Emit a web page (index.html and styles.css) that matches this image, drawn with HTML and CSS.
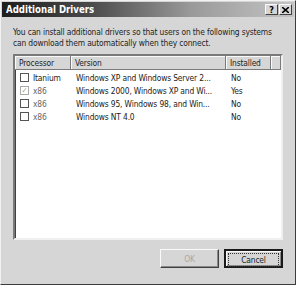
FILE: index.html
```html
<!DOCTYPE html>
<html lang="en">

<head>
  <meta charset="UTF-8">
  <title>Additional Drivers</title>
  <link rel="stylesheet" href="styles.css">
</head>

<body>
  <div class="dialog">
    <div class="titlebar">
      <span class="title">Additional Drivers</span>
      <div class="caption-buttons">
        <span class="caption-btn help">?</span>
        <span class="caption-btn close">
          <svg width="7" height="6" viewBox="0 0 7 6"><path d="M0 0L7 6M7 0L0 6" stroke="#000" stroke-width="1.6"/></svg>
        </span>
      </div>
    </div>

    <div class="content">
      <p class="intro">You can install additional drivers so that users on the following systems can download them automatically when they connect.</p>

      <div class="list">
        <div class="list-row list-header">
          <div class="col">Processor</div>
          <div class="col">Version</div>
          <div class="col">Installed</div>
          <div class="col"></div>
        </div>
        <div class="list-row">
          <div class="cell"><span class="check"></span>Itanium</div>
          <div class="cell">Windows XP and Windows Server 2...</div>
          <div class="cell">No</div>
        </div>
        <div class="list-row">
          <div class="cell dim"><span class="check checked">&#10003;</span>x86</div>
          <div class="cell">Windows 2000, Windows XP and Wi...</div>
          <div class="cell">Yes</div>
        </div>
        <div class="list-row">
          <div class="cell dim"><span class="check"></span>x86</div>
          <div class="cell">Windows 95, Windows 98, and Win...</div>
          <div class="cell">No</div>
        </div>
        <div class="list-row">
          <div class="cell dim"><span class="check"></span>x86</div>
          <div class="cell">Windows NT 4.0</div>
          <div class="cell">No</div>
        </div>
      </div>

      <div class="buttons">
        <button class="btn" disabled>OK</button>
        <button class="btn default"><span class="focus">Cancel</span></button>
      </div>
    </div>
  </div>
</body>

</html>
```

FILE: styles.css
```css
body {
  margin: 0;
  font-family: "DejaVu Sans Condensed", "DejaVu Sans", sans-serif;
  font-stretch: condensed;
  font-size: 8.4px;
  letter-spacing: -0.15px;
  color: #222;
}

.dialog {
  box-sizing: border-box;
  width: 296px;
  height: 285px;
  padding: 1px;
  background-color: #d6d6d6;
  border: 1px solid;
  border-color: #f2f2f2 #3c3c3c #3c3c3c #f2f2f2;
  display: flex;
  flex-direction: column;
}

.titlebar {
  height: 15px;
  display: flex;
  align-items: center;
  justify-content: space-between;
  padding: 0 2px 0 4px;
  background: linear-gradient(to right, #1e1e1e 0%, #4a4a4a 30%, #9a9a9a 65%, #c4c4c4 100%);
}

.title {
  color: #fff;
  font-weight: bold;
  font-size: 9.6px;
  letter-spacing: 0;
}

.caption-buttons {
  display: flex;
}

.caption-btn {
  box-sizing: border-box;
  width: 13px;
  height: 11px;
  display: flex;
  align-items: center;
  justify-content: center;
  background-color: #d6d6d6;
  border: 1px solid;
  border-color: #fafafa #404040 #404040 #fafafa;
  font-weight: bold;
  font-size: 9px;
  color: #000;
}

.close {
  margin-left: 1px;
}

.content {
  flex: 1;
  display: flex;
  flex-direction: column;
  padding: 10px 11px 10px 11px;
}

.intro {
  margin: 0 0 5px 0;
  line-height: 11px;
}

.list {
  height: 186px;
  box-sizing: border-box;
  background-color: #fff;
  border: 2px solid;
  border-color: #7a7a7a #f0f0f0 #f0f0f0 #7a7a7a;
  box-shadow: inset 1px 1px 0 #404040;
}

.list-row {
  display: grid;
  grid-template-columns: 56px 155px 45px 1fr;
  height: 13px;
  align-items: center;
}

.list-header {
  height: 14px;
  margin-bottom: 1px;
  background-color: #d6d6d6;
}

.list-header .col {
  height: 100%;
  box-sizing: border-box;
  padding-left: 4px;
  display: flex;
  align-items: center;
  border-right: 1px solid #7a7a7a;
  border-bottom: 1px solid #7a7a7a;
  box-shadow: inset 1px 1px 0 #fafafa;
}

.cell {
  padding-left: 5px;
  display: flex;
  align-items: center;
  white-space: nowrap;
  overflow: hidden;
}

.dim {
  color: #666;
}

.check {
  box-sizing: border-box;
  flex: none;
  width: 9px;
  height: 9px;
  margin-right: 4px;
  border: 1px solid #555;
  background-color: #fff;
  display: inline-flex;
  align-items: center;
  justify-content: center;
  font-size: 8px;
  line-height: 1;
}

.check.checked {
  border-color: #aaa;
  color: #999;
}

.buttons {
  display: flex;
  justify-content: flex-end;
  gap: 5px;
  margin-top: 9px;
}

.btn {
  box-sizing: border-box;
  width: 59px;
  height: 19px;
  padding: 0;
  font-family: inherit;
  font-stretch: condensed;
  font-size: 8.4px;
  letter-spacing: -0.15px;
  color: #222;
  background-color: #d6d6d6;
  border: 1px solid;
  border-color: #fafafa #404040 #404040 #fafafa;
  box-shadow: inset -1px -1px 0 #8a8a8a;
}

.btn:disabled {
  color: #a8a8a8;
}

.btn.default {
  border: 2px solid #1a1a1a;
  box-shadow: inset 1px 1px 0 #fafafa, inset -1px -1px 0 #8a8a8a;
}

.focus {
  display: block;
  margin: 2px;
  padding: 1px 0;
  border: 1px dotted #333;
}
```
